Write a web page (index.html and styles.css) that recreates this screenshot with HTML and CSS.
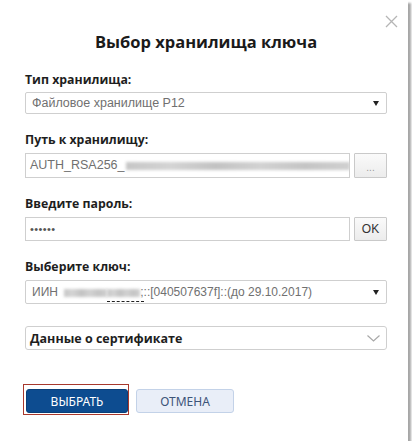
FILE: index.html
```html
<!doctype html>
<html>
  <head>
    <meta charset="utf-8">
    <title>Выбор хранилища ключа</title>
    <link rel="stylesheet" href="styles.css">
  </head>
  <body>
    <div class="dialog">
      <span class="close">
        <svg width="13" height="13" viewBox="0 0 13 13"><path d="M1 1L12 12M12 1L1 12" stroke="#b5b5b5" stroke-width="1.3" fill="none"/></svg>
      </span>

      <h1 class="title">Выбор хранилища ключа</h1>

      <label class="label first">Тип хранилища:</label>
      <div class="select">
        <span class="select-text">Файловое хранилище P12</span>
        <span class="arrow"></span>
      </div>

      <label class="label">Путь к хранилищу:</label>
      <div class="row">
        <div class="input">AUTH_RSA256_<span class="blur wide"></span></div>
        <button class="side-btn dots">...</button>
      </div>

      <label class="label">Введите пароль:</label>
      <div class="row">
        <div class="input pass">••••••</div>
        <button class="side-btn">OK</button>
      </div>

      <label class="label">Выберите ключ:</label>
      <div class="select key">
        <span class="select-text">ИИН <span class="blur short"></span><span class="mark"><span class="blur tail"></span>;</span>::[040507637f]::(до 29.10.2017)</span>
        <span class="arrow"></span>
      </div>

      <div class="cert">
        <span>Данные о сертификате</span>
        <svg width="13" height="7" viewBox="0 0 13 7"><path d="M0.5 0.5L6.5 6L12.5 0.5" stroke="#a8a8a8" stroke-width="1.2" fill="none"/></svg>
      </div>

      <div class="actions">
        <span class="focus"><button class="btn primary">ВЫБРАТЬ</button></span>
        <button class="btn cancel">ОТМЕНА</button>
      </div>
    </div>
  </body>
</html>
```
FILE: styles.css
```css
/* Общие стили */
body {
  margin: 0;
  padding: 0;
  background: #fff;
  font-family: "Open Sans", "Noto Sans", sans-serif;
}

/* Окно диалога */
.dialog {
  position: relative;
  box-sizing: border-box;
  width: 408px;
  height: 441px;
  padding: 0 21px 0 25px;
  background: #fff;
  box-shadow: 3px 3px 2px rgba(0, 0, 0, 0.35);
}

.close {
  position: absolute;
  top: 15px;
  right: 10px;
  width: 13px;
  height: 13px;
}

.close svg {
  display: block;
}

.title {
  margin: 0;
  padding-top: 30px;
  font-size: 16.5px;
  line-height: 24px;
  font-weight: 700;
  text-align: center;
  color: #1a1a1a;
}

/* Подписи полей */
.label {
  display: block;
  margin: 17px 0 4px;
  font-size: 12.3px;
  line-height: 18px;
  font-weight: 700;
  color: #1e1e1e;
}

.label.first {
  margin-top: 17px;
  margin-bottom: 3px;
}

/* Выпадающие списки */
.select {
  display: flex;
  align-items: center;
  justify-content: space-between;
  box-sizing: border-box;
  height: 22px;
  padding: 0 7px 0 6px;
  border: 1px solid #cfcfcf;
  border-radius: 2px;
  font-family: "Liberation Sans", Arial, sans-serif;
  font-size: 12.5px;
  color: #707070;
}

.select.key {
  height: 24px;
  font-size: 12px;
}

.select-text {
  white-space: nowrap;
}

.arrow {
  width: 0;
  height: 0;
  border-left: 3px solid transparent;
  border-right: 3px solid transparent;
  border-top: 5px solid #222;
}

/* Поля ввода */
.row {
  display: flex;
  gap: 4px;
}

.input {
  flex: 1;
  box-sizing: border-box;
  height: 25px;
  padding: 0 4px;
  border: 1px solid #cfcfcf;
  font-family: "Liberation Sans", Arial, sans-serif;
  font-size: 12.5px;
  line-height: 23px;
  color: #707070;
  white-space: nowrap;
  overflow: hidden;
}

.input.pass {
  height: 24px;
  line-height: 22px;
  font-size: 11px;
  color: #555;
  letter-spacing: 0.4px;
}

.side-btn {
  width: 33px;
  padding: 0;
  border: 1px solid #c9c9c9;
  border-radius: 1px;
  background: linear-gradient(#fafafa, #ececec);
  font-family: "Liberation Sans", Arial, sans-serif;
  font-size: 12px;
  color: #333;
}

.side-btn.dots {
  color: #999;
  font-size: 10px;
  padding-top: 4px;
}

/* Размытые участки */
.blur {
  display: inline-block;
  height: 8px;
  vertical-align: middle;
  background: linear-gradient(90deg, #c6c6c6, #d4d4d4 20%, #c2c2c2 40%, #d2d2d2 60%, #c4c4c4 80%, #d0d0d0);
  filter: blur(1.4px);
}

.blur.wide {
  width: 224px;
  margin-left: 1px;
}

.blur.short {
  width: 43px;
  margin-left: 3px;
}

.blur.tail {
  width: 33px;
}

.mark {
  display: inline-block;
  border-bottom: 1px dashed #222;
  line-height: 13px;
  padding-bottom: 2px;
  margin-bottom: -4px;
}

/* Данные о сертификате */
.cert {
  display: flex;
  align-items: center;
  justify-content: space-between;
  box-sizing: border-box;
  height: 24px;
  margin-top: 22px;
  padding: 0 6px 0 4px;
  border: 1px solid #cfcfcf;
  border-radius: 3px;
  font-size: 12.5px;
  font-weight: 700;
  color: #1e1e1e;
}

/* Кнопки */
.actions {
  display: flex;
  align-items: flex-end;
  gap: 7px;
  margin-top: 34px;
  margin-left: -2px;
}

.focus {
  display: block;
  padding: 4px 0 1px 2px;
  border: 1px solid #a8382c;
}

.btn {
  display: block;
  height: 24px;
  padding: 0;
  border-radius: 3px;
  font-family: "Noto Sans", "Open Sans", sans-serif;
  font-size: 12px;
}

.primary {
  width: 102px;
  border: 1px solid #0a3f78;
  background: #0d4c90;
  color: #fff;
}

.cancel {
  width: 98px;
  margin-bottom: 2px;
  border: 1px solid #c3d2e8;
  background: #e9eef8;
  color: #3d5478;
}
```
